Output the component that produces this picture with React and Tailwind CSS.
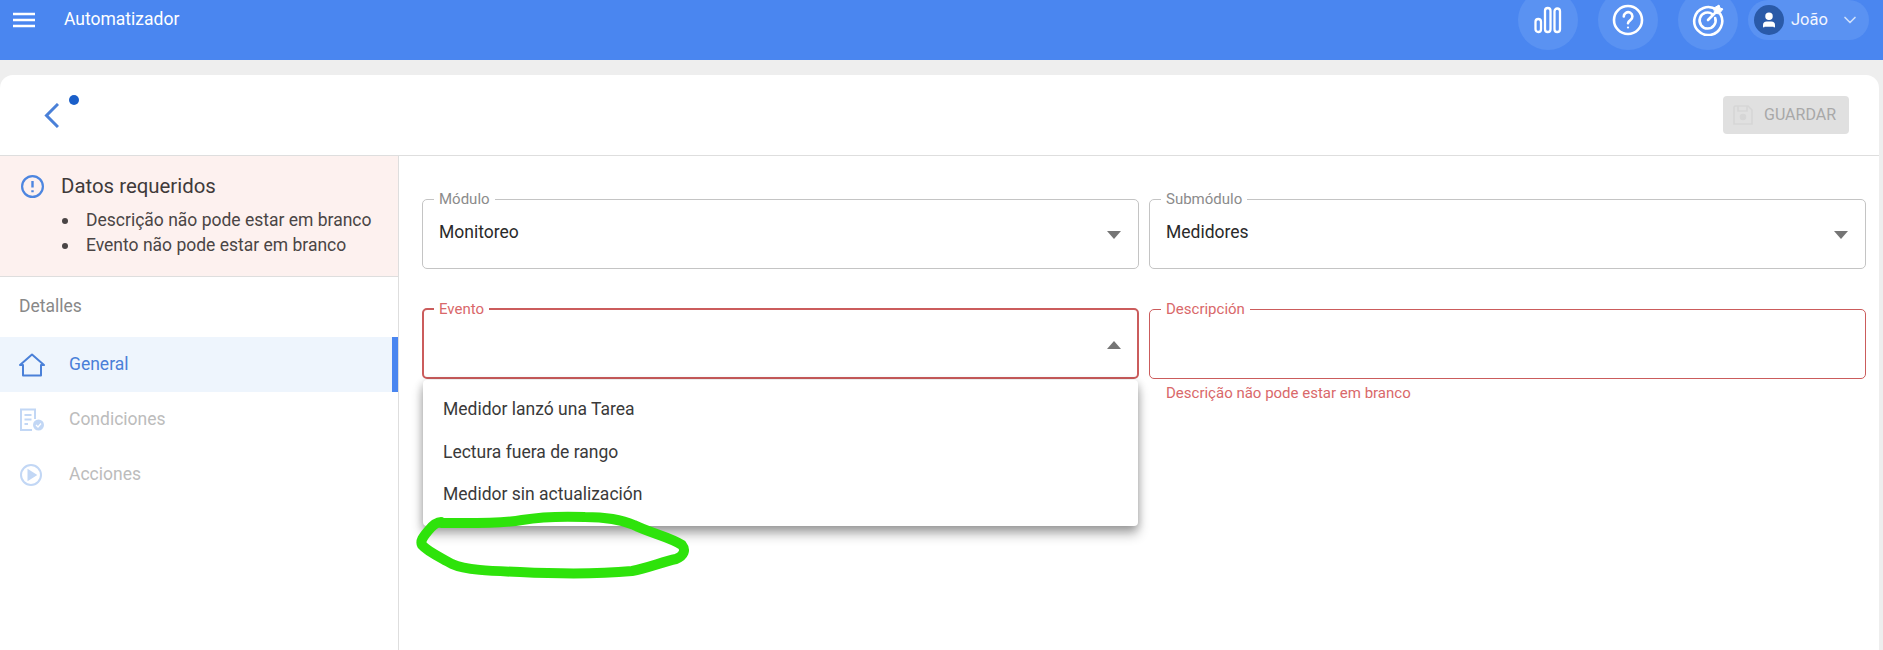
import React from "react";
import { ChevronDown, User } from "lucide-react";

function Field({ label, error, thick, value, arrow, helper, children }) {
  const border = error ? (thick ? "border-2 border-[#cb5c5c]" : "border border-[#cb5c5c]") : "border border-[#c4c4c4]";
  return (
    <div className="relative min-w-0">
      <fieldset className={`h-[77px] rounded-[5px] ${border} ${thick ? "px-[10px]" : "px-[11px]"} flex`}>
        <legend className={`px-[5px] text-[15px] leading-[14px] ${error ? "text-[#d9686a]" : "text-[#8b8b8b]"}`}>{label}</legend>
        <div className="flex w-full items-start justify-between pl-[5px] pt-[14px]">
          {value ? <span className="text-[17.5px] leading-[24px] text-[#2a2a2a]">{value}</span> : <span />}
          {arrow && (
            <svg width="14" height="8" viewBox="0 0 14 8" className="mr-[6px] mt-[11px]">
              <path d={arrow === "up" ? "M0 8L7 0L14 8Z" : "M0 0L7 8L14 0Z"} fill="#757575" />
            </svg>
          )}
        </div>
      </fieldset>
      {helper && <p className="ml-[17px] mt-[5px] text-[15px] leading-[18px] text-[#d9686a]">{helper}</p>}
      {children}
    </div>
  );
}

function HeaderCircle({ children }) {
  return (
    <div className="flex h-[60px] w-[60px] -mt-[10px] items-center justify-center rounded-full bg-[#5a92f2]">
      {children}
    </div>
  );
}

function Bullet({ children }) {
  return (
    <li className="flex items-center">
      <span className="ml-[41px] h-[6px] w-[6px] shrink-0 rounded-full bg-[#4a4545]" />
      <span className="ml-[18px]">{children}</span>
    </li>
  );
}

export default function App() {
  return (
    <div className="h-[650px] w-[1883px] overflow-hidden bg-[#eeeeee] font-['Roboto',sans-serif] relative">
      <header className="flex h-[60px] items-start bg-[#4a86f0] text-white">
        <svg width="24" height="16" viewBox="0 0 24 16" className="ml-[12px] mt-[12px]">
          <path d="M1 2H23M1 8H23M1 14H23" stroke="#fff" strokeWidth="2.4" />
        </svg>
        <span className="ml-[28px] mt-[8px] text-[17.5px] leading-[22px]">Automatizador</span>
        <div className="ml-auto mr-[14px] flex items-start">
          <div className="flex gap-[20px]">
            <HeaderCircle>
              <svg width="28" height="28" viewBox="0 0 28 28" fill="none" stroke="#fff" strokeWidth="2.3">
                <rect x="1.5" y="13" width="5.5" height="13" rx="2.75" />
                <rect x="11" y="2" width="5.5" height="24" rx="2.75" />
                <rect x="20.5" y="2.5" width="5.5" height="23.5" rx="2.75" />
              </svg>
            </HeaderCircle>
            <HeaderCircle>
              <svg width="32" height="32" viewBox="0 0 32 32" fill="none" stroke="#fff" strokeWidth="2.6" strokeLinecap="round">
                <circle cx="16" cy="16" r="14" />
                <path d="M11.8 12.5a4.3 4.3 0 1 1 6.6 3.6c-1.5 1-2.4 1.7-2.4 3.2" />
                <circle cx="16" cy="23.5" r="1.1" fill="#fff" stroke="none" />
              </svg>
            </HeaderCircle>
            <HeaderCircle>
              <svg width="32" height="32" viewBox="0 0 32 32" fill="none" stroke="#fff" strokeWidth="2.6" strokeLinecap="round">
                <path d="M24.5 5.8A14 14 0 1 0 28.3 10" />
                <path d="M20.5 10.2A8 8 0 1 0 23.2 14" />
                <path d="M16 16L24 8" />
                <path d="M22 4l5-3 1 3 3 1-4 5-4-1z" fill="#fff" strokeWidth="1" />
              </svg>
            </HeaderCircle>
          </div>
          <div className="ml-[10px] flex h-[40px] w-[121px] items-center rounded-full bg-[#5a92f2] pl-[6px]">
            <div className="flex h-[30px] w-[30px] items-center justify-center rounded-full bg-[#2a5aa8]">
              <User size={18} fill="#fff" stroke="#fff" strokeWidth={2} />
            </div>
            <span className="ml-[7px] text-[16.5px] text-[#f2f6ff]">João</span>
            <ChevronDown size={20} strokeWidth={2} className="ml-[12px] text-[#cfe0fb]" />
          </div>
        </div>
      </header>

      <main className="mt-[15px] ml-0 mr-[4px] h-[575px] rounded-t-[13px] bg-white">
        <div className="flex h-[81px] items-start border-b border-[#dedede]">
          <div className="relative ml-[44px] mt-[28px]">
            <svg width="15" height="25" viewBox="0 0 15 25" fill="none" stroke="#4a80d8" strokeWidth="3">
              <path d="M14 1L2.5 12.5L14 24" />
            </svg>
            <span className="absolute left-[25px] -top-[8px] h-[10px] w-[10px] rounded-full bg-[#1a5fc9]" />
          </div>
          <button className="ml-auto mr-[30px] mt-[21px] flex h-[38px] w-[126px] items-center rounded-[4px] bg-[#e0e0e0] pl-[10px] text-[16px] text-[#a8a8a8]">
            <svg width="20" height="20" viewBox="0 0 20 20" fill="none" stroke="#d6d6d6" strokeWidth="1.6" className="mr-[11px]">
              <path d="M2 1h13l4 4v14H1V2z" />
              <path d="M5 1v5h9V1" />
              <circle cx="10" cy="12" r="2.5" fill="#d6d6d6" />
            </svg>
            GUARDAR
          </button>
        </div>

        <div className="flex h-[494px]">
          <aside className="w-[399px] shrink-0 border-r border-[#dedede]">
            <div className="h-[121px] border-b border-[#dedede] bg-[#fdf1ef] pl-[21px] pt-[18px]">
              <div className="flex items-center">
                <svg width="23" height="23" viewBox="0 0 23 23" fill="none" stroke="#4d86e0" strokeWidth="2.2">
                  <circle cx="11.5" cy="11.5" r="10.4" />
                  <path d="M11.5 6V12.5M11.5 15.2V17.2" strokeWidth="2.4" />
                </svg>
                <span className="ml-[17px] text-[20.4px] leading-[24px] text-[#3f3a3a]">Datos requeridos</span>
              </div>
              <ul className="mt-[10px] text-[17.5px] leading-[25px] text-[#4a4545]">
                <Bullet>Descrição não pode estar em branco</Bullet>
                <Bullet>Evento não pode estar em branco</Bullet>
              </ul>
            </div>
            <div className="pl-[19px] pt-[17px] text-[17.5px] leading-[24px] text-[#888888]">Detalles</div>
            <nav className="mt-[19px]">
              <div className="flex h-[55px] items-center border-r-[6px] border-[#4a86f0] bg-[#eef5fd] pl-[19px]">
                <svg width="26" height="24" viewBox="0 0 26 24" fill="none" stroke="#4a80d8" strokeWidth="2" strokeLinejoin="round">
                  <path d="M1 12L13 1.5L25 12H22V22.5H4V12Z" />
                </svg>
                <span className="ml-[24px] text-[17.5px] text-[#4a7fd8]">General</span>
              </div>
              <div className="flex h-[55px] items-center pl-[19px]">
                <svg width="26" height="24" viewBox="0 0 26 24" fill="none" stroke="#c2d7f5" strokeWidth="2">
                  <path d="M13 22H2V1.5H16V11" />
                  <path d="M5.5 7H12.5M5.5 11.5H12.5M5.5 16H9" />
                  <circle cx="19.5" cy="17" r="5.5" fill="#c2d7f5" stroke="none" />
                  <path d="M17 17l2 2 3-3.5" stroke="#fff" strokeWidth="1.3" />
                </svg>
                <span className="ml-[24px] text-[17.5px] text-[#bcbcbc]">Condiciones</span>
              </div>
              <div className="flex h-[55px] items-center pl-[19px]">
                <svg width="26" height="24" viewBox="0 0 26 24" fill="none" stroke="#c2d7f5" strokeWidth="2">
                  <circle cx="12" cy="12" r="10" />
                  <path d="M9.5 7.5L16.5 12L9.5 16.5Z" fill="#c2d7f5" />
                </svg>
                <span className="ml-[24px] text-[17.5px] text-[#bcbcbc]">Acciones</span>
              </div>
            </nav>
          </aside>

          <section className="flex-1 pl-[23px] pr-[13px] pt-[36px]">
            <div className="grid grid-cols-[717px_1fr] gap-x-[10px] gap-y-[33px]">
              <Field label="Módulo" value="Monitoreo" arrow="down" />
              <Field label="Submódulo" value="Medidores" arrow="down" />
              <Field label="Evento" error thick arrow="up">
                <div className="absolute left-[1px] top-[78px] z-10 w-[715px] rounded-[4px] bg-white pb-[10px] pt-[8px] text-[17.5px] text-[#3a3a3a] shadow-[0_8px_12px_rgba(0,0,0,0.3),0_2px_8px_rgba(0,0,0,0.2)]">
                  <div className="flex h-[42.5px] items-center pl-[20px]">Medidor lanzó una Tarea</div>
                  <div className="flex h-[42.5px] items-center pl-[20px]">Lectura fuera de rango</div>
                  <div className="flex h-[42.5px] items-center pl-[20px]">Medidor sin actualización</div>
                </div>
              </Field>
              <Field label="Descripción" error helper="Descrição não pode estar em branco" />
            </div>
          </section>
        </div>
      </main>

      <svg className="pointer-events-none absolute left-0 top-0 z-20" width="1883" height="650" fill="none">
        <path
          d="M441 522C436 522 432 526 428 531C423 537 420 541 422 545C428 552 440 557 452 564C465 570 490 571 520 572C560 574 600 574 632 571C648 568 662 562 676 559C684 556 686 550 682 545C670 537 650 533 634 525C620 519 604 517 585 517C560 516 540 517 522 520C500 524 470 523 441 523"
          stroke="#2ee30b"
          strokeWidth="10"
          strokeLinecap="round"
          strokeLinejoin="round"
        />
      </svg>
    </div>
  );
}
